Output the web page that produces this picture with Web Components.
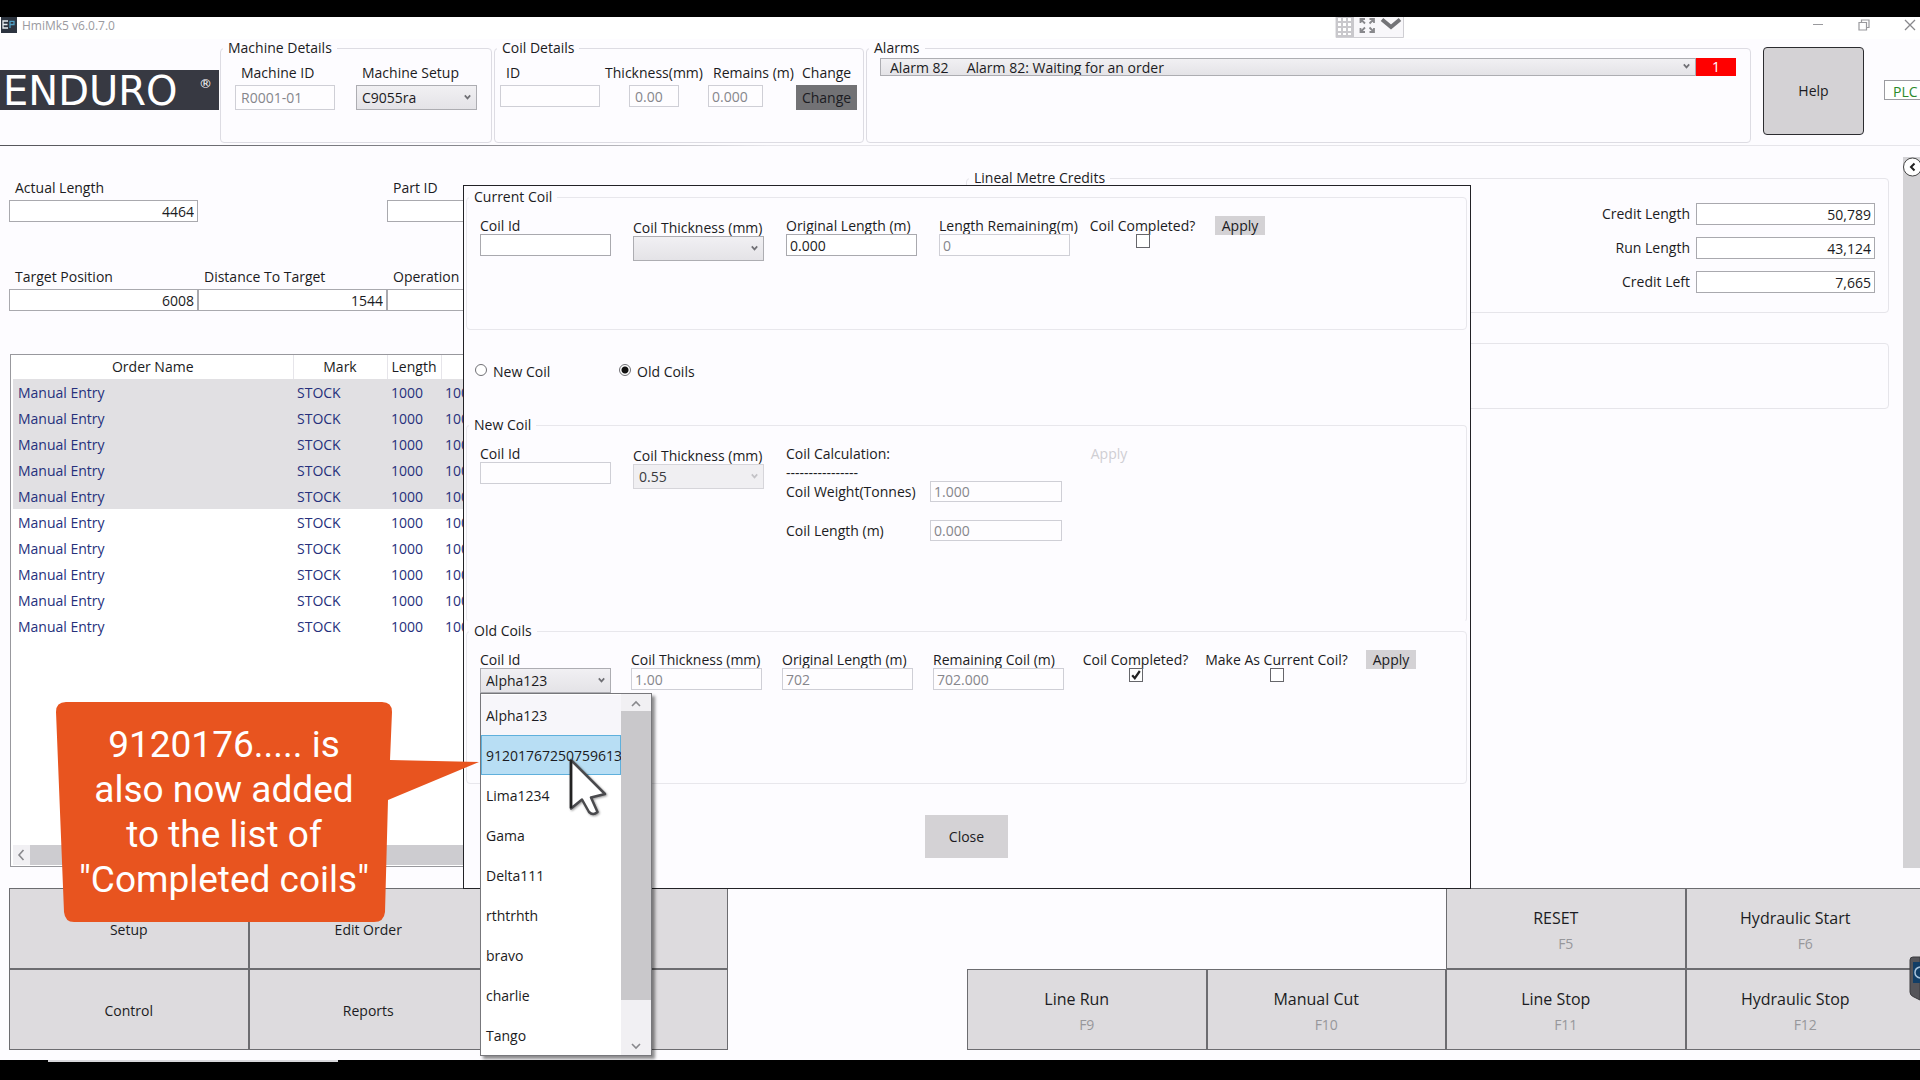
<!DOCTYPE html>
<html lang="en">
<head>
<meta charset="utf-8">
<title>HmiMk5 v6.0.7.0</title>
<style>
  html, body { margin: 0; height: 100%; background: #000; overflow: hidden; }
  body { font: 14px/18px "Open Sans", "Noto Sans", sans-serif; color: #1b1b22; }
</style>
</head>
<body>
<hmi-app></hmi-app>
<script>
const base = `
  *, *::before, *::after { box-sizing: border-box; }
  :host { box-sizing: border-box; }
  :host([hidden]) { display: none; }
  button, input, select { font: inherit; color: inherit; margin: 0; border-radius: 0; }
`;

class HmiElement extends HTMLElement {
  connectedCallback() {
    if (this.shadowRoot) return;
    const root = this.attachShadow({ mode: 'open' });
    root.innerHTML = `<style>${base}${this.styles()}</style>${this.render()}`;
  }
  attr(name, fallback = '') { return this.getAttribute(name) ?? fallback; }
  styles() { return ''; }
  render() { return '<slot></slot>'; }
}

/* Label above (or beside) a text box */
customElements.define('hmi-field', class extends HmiElement {
  styles() {
    return `
      :host { display: flex; flex-direction: column; width: var(--w, 131px); flex: none; }
      :host([inline]) { flex-direction: row; align-items: center; width: auto; }
      label { line-height: var(--label-line, 16px); white-space: nowrap; margin-bottom: var(--label-gap, 0); padding-left: var(--indent, 0); }
      :host([center]) { align-items: center; }
      :host([inline]) label { margin: 0; flex: none; width: var(--label-w, auto); text-align: var(--label-align, left); padding-right: var(--label-pad, 0); }
      input { width: var(--input-w, 100%); height: var(--input-h, 22px); padding: 0 3px; border: 1px solid #a9a9ae; background: #fff; outline: none; }
      :host([right]) input { text-align: right; }
      input:disabled { color: #86868c; border-color: #cfcfd6; background: #fefdff; }
      input.pad { padding-left: var(--input-pad, 3px); }`;
  }
  render() {
    return `<label for="c">${this.attr('label')}</label>
      <input id="c" class="pad" type="text" value="${this.attr('value')}" ${this.hasAttribute('disabled') ? 'disabled' : ''}>`;
  }
});

/* Label above a drop-down, with an optional popup in the slot */
customElements.define('hmi-select', class extends HmiElement {
  styles() {
    return `
      :host { display: flex; flex-direction: column; width: var(--w, 131px); flex: none; }
      label { line-height: var(--label-line, 16px); white-space: nowrap; margin-bottom: var(--label-gap, 0); padding-left: var(--indent, 0); }
      .box { position: relative; display: flex; }
      select { appearance: none; flex: 1; min-width: 0; height: var(--input-h, 25px); padding: 0 18px 0 var(--input-pad, 5px); border: 1px solid #adadb2; background: linear-gradient(#f1f0f3, #e4e3e7); outline: none; }
      select:disabled { opacity: 1; color: #3a3a40; background: #f0eff2; border-color: #d6d5da; }
      svg { position: absolute; right: 6px; top: 50%; margin-top: -4px; pointer-events: none; }
      .off { opacity: .35; }`;
  }
  render() {
    const off = this.hasAttribute('disabled');
    const lab = this.attr('label');
    return `${lab ? `<label for="c">${lab}</label>` : ''}
      <div class="box"><select id="c" ${lab ? '' : `aria-label="${this.attr('name')}"`} ${off ? 'disabled' : ''}><option>${this.attr('value')}</option></select>
      <svg class="${off ? 'off' : ''}" width="7" height="7" viewBox="0 0 7 7"><path d="M.8 1.4 3.5 4.4 6.2 1.4" fill="none" stroke="#707075" stroke-width="1.7"/></svg>
      <slot></slot></div>`;
  }
});

/* Label above a tick box */
customElements.define('hmi-check', class extends HmiElement {
  styles() {
    return `
      :host { display: flex; flex-direction: column; align-items: center; width: var(--w, 103px); flex: none; }
      label { line-height: 16px; white-space: nowrap; }
      .box { position: relative; width: 14px; height: 14px; }
      input { appearance: none; display: block; width: 14px; height: 14px; border: 1px solid #66666b; background: #fff; }
      svg { position: absolute; inset: 0; pointer-events: none; display: none; }
      input:checked + svg { display: block; }`;
  }
  render() {
    return `<label for="c">${this.attr('label')}</label>
      <div class="box"><input id="c" type="checkbox" ${this.hasAttribute('checked') ? 'checked' : ''}>
      <svg width="14" height="14" viewBox="0 0 14 14"><path d="M3.2 7.2 5.8 10.2 10.8 3" fill="none" stroke="#222" stroke-width="2.2"/></svg></div>`;
  }
});

customElements.define('hmi-radio', class extends HmiElement {
  styles() {
    return `
      :host { display: flex; align-items: flex-start; gap: 6px; flex: none; width: 144px; }
      input { appearance: none; width: 12px; height: 12px; margin-top: 1px; border: 1px solid #707075; border-radius: 50%; background: #fff; }
      input:checked { background: radial-gradient(circle, #111 3px, #fff 4px); }
      label { line-height: 18px; }`;
  }
  render() {
    return `<input id="c" type="radio" ${this.hasAttribute('checked') ? 'checked' : ''}><label for="c">${this.attr('label')}</label>`;
  }
});

customElements.define('hmi-button', class extends HmiElement {
  styles() {
    return `
      :host { display: flex; flex: none; width: var(--w, 50px); height: var(--h, 19px); }
      button { flex: 1; padding: 0; border: var(--border, 0); border-radius: var(--radius, 0); background: var(--bg, #d4d2d5); line-height: 18px; }
      button:disabled { background: none; color: #cfced3; }`;
  }
  render() { return `<button type="button" ${this.hasAttribute('disabled') ? 'disabled' : ''}><slot></slot></button>`; }
});

/* Captioned group box */
customElements.define('hmi-group', class extends HmiElement {
  styles() {
    return `
      :host { display: flex; min-width: 0; }
      fieldset { flex: 1; min-width: 0; margin: 0; padding: 0; border: 1px solid var(--line, #dddce3); border-radius: 4px; }
      :host([open]) fieldset { border-bottom-color: transparent; }
      legend { margin-left: 2px; padding: 0 5px; line-height: 18px; }`;
  }
  render() {
    const cap = this.attr('caption');
    return `<fieldset>${cap ? `<legend>${cap}</legend>` : ''}<slot></slot></fieldset>`;
  }
});

customElements.define('hmi-titlebar', class extends HmiElement {
  styles() {
    return `
      :host { display: flex; height: 22px; background: #fff; color: #9a9a9f; font-size: 12px; padding-left: 1px; justify-content: space-between; position: relative; }
      .name { display: flex; gap: 5px; line-height: 17px; }
      .tools { position: absolute; left: 1335px; top: 0; }
      .win { display: flex; gap: 34px; padding: 2px 4px 0 0; }
      svg { display: block; }
      .win button { border: 0; padding: 0; background: none; height: 12px; }`;
  }
  render() {
    return `<div class="name">
        <svg width="16" height="16" viewBox="0 0 16 16"><rect width="16" height="16" fill="#2d3540"/><path d="M7 4H2v7h5M2 7.500h4.500" fill="none" stroke="#e8eef2" stroke-width="1.300"/><path d="M9 11V4.300h4v3.200H9" fill="none" stroke="#4f9fc4" stroke-width="1.300"/></svg>
        <span>HmiMk5 v6.0.7.0</span></div>
      <svg class="tools" width="70" height="21" viewBox="0 0 70 21">
        <path d="M1 0V20.500H68.500V0" fill="#f8f7fa" stroke="#cfced3"/><rect x="1" width="18" height="20" fill="#c9c8cc"/>
        <g fill="#fff"><path d="M3 1h3v3H3zM8 1h3v3H8zM13 1h3v3h-3zM3 6h3v3H3zM8 6h3v3H8zM13 6h3v3h-3zM3 11h3v3H3zM8 11h3v3H8zM13 11h3v3h-3zM3 16h3v2H3zM8 16h3v2H8zM13 16h3v2h-3z"/></g>
        <g fill="none" stroke="#88888c" stroke-width="1.800"><path d="M25.500 6V2H30M25.500 2l4.500 4.500M34.500 2H39v4M39 2l-4.500 4.500M25.500 11v4H30M25.500 15l4.500-4.500M34.500 15H39v-4M39 15l-4.500-4.500"/></g>
        <path d="M47 2.500 56 10 65 2.500" fill="none" stroke="#737377" stroke-width="4"/></svg>
      <div class="win">
        <button aria-label="Minimise"><svg width="12" height="12"><path d="M1 5.500h10" stroke="#99999d"/></svg></button>
        <button aria-label="Restore"><svg width="12" height="12" fill="none" stroke="#99999d" stroke-width="1.200"><path d="M1 3.500h7.500v7.500H1zM3.500 3V1H11v7.500H9"/></svg></button>
        <button aria-label="Close"><svg width="12" height="12"><path d="M1 1 11 11M11 1 1 11" stroke="#88888c" stroke-width="1.300"/></svg></button>
      </div>`;
  }
});

customElements.define('hmi-logo', class extends HmiElement {
  styles() {
    return `
      :host { display: flex; flex: none; width: 219px; height: 40px; margin-top: 31px; padding: 0 7px 0 3px; background: #373942; color: #fff; justify-content: space-between;
        font-family: "DejaVu Sans", sans-serif; }
      b { font-weight: 400; font-size: 40px; line-height: 42px; }
      sup { font-size: 13px; line-height: 28px; vertical-align: top; }`;
  }
  render() { return `<b>ENDURO</b><sup>®</sup>`; }
});

customElements.define('hmi-header', class extends HmiElement {
  styles() {
    return `
      :host { display: flex; height: 107px; border-bottom: 1px solid #e4e3e8; border-image: linear-gradient(90deg, #55555a 0, #8a8a90 25%, #e6e5ea 40%) 1; }
      hmi-group { height: 104px; }
      .row { display: flex; padding: 7px 5px 0 14px; --label-line: 18px; --label-gap: 3px; --input-pad: 5px; }
      .col { display: flex; flex-direction: column; gap: 3px; flex: none; }
      .alarm { display: flex; padding: 1px 14px 0 13px; }
      .alarm hmi-select { flex: 1; --input-h: 18px; --input-pad: 9px; }
      .count { width: 40px; height: 18px; background: #f00; color: #fff; text-align: center; }
      .help { margin: 8px 0 0 12px; --w: 101px; --h: 88px; --border: 1px solid #2c2c30; --radius: 4px; }
      .plc { flex: none; width: 50px; height: 20px; margin: 41px -14px 0 20px; border: 1px solid #9b9ba0; padding-left: 8px; line-height: 22px; color: #2a8a2a; background: #fff; }`;
  }
  render() {
    return `
      <hmi-logo></hmi-logo>
      <hmi-group caption="Machine Details" style="flex:0 0 272px;margin-left:1px"><div class="row" style="gap:21px;--indent:6px">
        <hmi-field label="Machine ID" value="R0001-01" disabled style="--w:100px;--input-h:25px"></hmi-field>
        <hmi-select label="Machine Setup" value="C9055ra" style="--w:121px"></hmi-select></div></hmi-group>
      <hmi-group caption="Coil Details" style="flex:0 0 370px;margin-left:2px"><div class="row" style="padding-left:5px">
        <hmi-field label="ID" disabled style="--w:100px;--indent:6px"></hmi-field>
        <hmi-field label="Thickness(mm)" value="0.00" disabled center style="--w:108px;--input-w:50px"></hmi-field>
        <hmi-field label="Remains (m)" value="0.000" disabled style="--w:88px;--input-w:55px;--indent:5px;--input-pad:3px"></hmi-field>
        <div class="col"><span style="padding-left:6px">Change</span><hmi-button style="--w:61px;--h:25px;--bg:#727275">Change</hmi-button></div></div></hmi-group>
      <hmi-group caption="Alarms" style="flex:1;margin-left:2px"><div class="alarm">
        <hmi-select name="Active alarms" value="Alarm 82&nbsp;&nbsp;&nbsp;&nbsp;&nbsp;Alarm 82: Waiting for an order"></hmi-select><span class="count">1</span></div></hmi-group>
      <hmi-button class="help">Help</hmi-button>
      <span class="plc">PLC</span>`;
  }
});

customElements.define('hmi-orders', class extends HmiElement {
  styles() {
    return `
      :host { display: flex; flex-direction: column; justify-content: space-between; border: 1px solid #98989d; background: #fff; overflow: hidden; padding-left: 2px; }
      table { border-collapse: collapse; table-layout: fixed; width: 100%; }
      th { font-weight: 400; height: 24px; padding: 0; border-right: 1px solid #e6e5ea; }
      td { height: 26px; padding: 1px 4px 0; color: #26307c; }
      td:first-child { padding-left: 5px; }
      tr.sel td { background: #e1e0e3; }
      .bar { display: flex; height: 20px; margin-bottom: 1px; background: #f1f0f3; }
      .bar svg { flex: none; width: 17px; height: 20px; }
      .bar i { width: 600px; background: #cdccd0; }`;
  }
  render() {
    const rows = Array.from({ length: 10 }, (_, i) =>
      `<tr class="${i < 5 ? 'sel' : ''}"><td>Manual Entry</td><td>STOCK</td><td>1000</td><td>1000</td></tr>`).join('');
    return `<table><colgroup><col style="width:280px"><col style="width:94px"><col style="width:54px"><col></colgroup>
      <thead><tr><th>Order Name</th><th>Mark</th><th>Length</th><th></th></tr></thead><tbody>${rows}</tbody></table>
      <div class="bar"><svg viewBox="0 0 17 20"><path d="M10.500 5 6 10l4.500 5" fill="none" stroke="#88888c" stroke-width="1.600"/></svg><i></i></div>`;
  }
});

customElements.define('hmi-workspace', class extends HmiElement {
  styles() {
    return `
      :host { display: flex; flex: 1; min-height: 0; padding-left: 9px; }
      .cols { flex: 1; display: grid; grid-template-columns: 944fr 923fr; gap: 13px; min-width: 0; }
      .left { display: flex; flex-direction: column; padding: 33px 0 21px; min-width: 0; }
      .grid { display: grid; grid-template-columns: repeat(5, 189px); row-gap: 46px; margin-bottom: 43px; --w: 189px; --label-line: 18px; --label-gap: 3px; --indent: 6px; }
      hmi-orders { flex: 1; margin-left: 1px; }
      .right { padding-top: 23px; display: flex; flex-direction: column; gap: 30px; --line: #e6e5ea; }
      .credits { display: flex; flex-direction: column; align-items: flex-end; gap: 12px; padding: 16px 13px 0 0; --input-h: 22px; --input-w: 179px; --label-pad: 6px; }
      .side { width: 17px; margin: 11px 0 20px 14px; background: #d3d2d5; flex: none; position: relative; }
      .side button { position: absolute; left: 0; top: 0; border: 0; padding: 0; background: none; }
      svg { display: block; }`;
  }
  render() {
    return `<div class="cols"><div class="left">
        <div class="grid">
          <hmi-field label="Actual Length" value="4464" right></hmi-field><span></span><hmi-field label="Part ID" right></hmi-field><span></span><span></span>
          <hmi-field label="Target Position" value="6008" right></hmi-field><hmi-field label="Distance To Target" value="1544" right></hmi-field><hmi-field label="Operation Count" right></hmi-field>
        </div>
        <hmi-orders></hmi-orders></div>
      <div class="right">
        <hmi-group caption="Lineal Metre Credits" style="height:144px"><div class="credits">
          <hmi-field inline right label="Credit Length" value="50,789"></hmi-field>
          <hmi-field inline right label="Run Length" value="43,124"></hmi-field>
          <hmi-field inline right label="Credit Left" value="7,665"></hmi-field></div></hmi-group>
        <hmi-group style="height:66px"></hmi-group></div></div>
      <div class="side"><button aria-label="Expand panel"><svg width="20" height="20" viewBox="0 0 20 20"><circle cx="9.500" cy="10" r="9" fill="#fff" stroke="#444"/><path d="M11.500 6.500 8 10l3.500 3.500" fill="none" stroke="#222" stroke-width="2"/></svg></button></div>`;
  }
});

customElements.define('hmi-key', class extends HmiElement {
  styles() {
    return `
      :host { display: flex; }
      button { flex: 1; border: 1px solid #6c6c70; background: #dddbde; padding: 2px 0 0; display: flex; flex-direction: column; align-items: center; justify-content: center; }
      .big { font-size: 16px; line-height: 22px; margin: 0 20px 6px 0; }
      small { font-size: 14px; line-height: 18px; color: #97979b; }`;
  }
  render() {
    const f = this.attr('fkey'), n = this.attr('name');
    return `<button type="button" ${n ? '' : 'aria-label="Function"'}><span class="${f ? 'big' : ''}">${n}</span>${f ? `<small>${f}</small>` : ''}</button>`;
  }
});

customElements.define('hmi-footer', class extends HmiElement {
  styles() {
    return `
      :host { display: grid; grid-template-columns: repeat(8, 1fr); grid-auto-rows: 81px; margin: 0 -5px 10px 9px; }`;
  }
  render() {
    const k = (n, c, r, f = '') => `<hmi-key name="${n}" fkey="${f}" style="grid-area:${r}/${c}"></hmi-key>`;
    return k('Setup', 1, 1) + k('Edit Order', 2, 1) + k('', 3, 1) + k('RESET', 7, 1, 'F5') + k('Hydraulic Start', 8, 1, 'F6')
      + k('Control', 1, 2) + k('Reports', 2, 2) + k('', 3, 2) + k('Line Run', 5, 2, 'F9') + k('Manual Cut', 6, 2, 'F10')
      + k('Line Stop', 7, 2, 'F11') + k('Hydraulic Stop', 8, 2, 'F12');
  }
});

/* Popup list that hangs under a drop-down */
customElements.define('hmi-popup', class extends HmiElement {
  styles() {
    return `
      :host { position: absolute; left: 0; top: 100%; z-index: 5; display: flex; width: 172px; height: 363px; border: 1px solid #77777b; background: #fff; box-shadow: 3px 3px 3px rgba(0,0,0,.45); }
      .list { flex: 1; overflow: hidden; padding-top: 1px; }
      .item { height: 40px; line-height: 40px; padding-left: 4px; border: 1px solid transparent; white-space: nowrap; }
      .first { background: #f7f6fa; }
      .hot { background: #b8def4; border-color: #5fb0dc; }
      .bar { width: 30px; display: flex; flex-direction: column; background: #f1f0f3; }
      .bar i { flex: none; height: 289px; background: #c9c8cb; }
      .down { margin-top: auto; }
      svg { display: block; }`;
  }
  render() {
    const names = ['Alpha123', '91201767250759613', 'Lima1234', 'Gama', 'Delta111', 'rthtrhth', 'bravo', 'charlie', 'Tango'];
    return `<div class="list" role="listbox" aria-label="Coil Id">${names.map((n, i) =>
        `<div role="option" class="item ${['first', 'hot'][i] || ''}">${n}</div>`).join('')}</div>
      <div class="bar"><svg width="30" height="17"><path d="M11 12 15 8l4 4" fill="none" stroke="#88888c" stroke-width="1.600"/></svg><i></i>
      <svg class="down" width="30" height="17"><path d="M11 6 15 10l4-4" fill="none" stroke="#88888c" stroke-width="1.600"/></svg></div>`;
  }
});

customElements.define('hmi-coil-dialog', class extends HmiElement {
  styles() {
    return `
      :host { position: absolute; left: 463px; right: 449px; top: 168px; display: flex; flex-direction: column; padding: 2px 3px 30px 2px; border: 1px solid #222226; background: #fdfcff; --line: #e8e7ec; }
      .row { display: flex; align-items: flex-start; padding: 10px 0 0 13px; gap: 22px; }
      .row > * { margin-top: 2px; }
      .row > hmi-button { margin-top: 0; }
      .low { margin-top: 4px; }
      .old { gap: 20px; }
      .old .low { margin-top: 2px; }
      .radios { display: flex; padding: 33px 0 0 9px; height: 86px; }
      .calc { display: grid; grid-template-columns: auto; --input-h: 21px; --input-w: 132px; --label-w: 144px; line-height: 16px; }
      .calc .dash { margin-top: 3px; }
      .calc hmi-field + hmi-field { margin-top: 18px; }
      .close { align-self: center; margin-top: 31px; --w: 83px; --h: 43px; }`;
  }
  render() {
    return `
      <hmi-group caption="Current Coil" style="height:142px"><div class="row">
        <hmi-field label="Coil Id"></hmi-field>
        <hmi-select class="low" label="Coil Thickness (mm)"></hmi-select>
        <hmi-field label="Original Length (m)" value="0.000"></hmi-field>
        <hmi-field label="Length Remaining(m)" value="0" disabled></hmi-field>
        <hmi-check label="Coil Completed?" style="--w:101px"></hmi-check>
        <hmi-button>Apply</hmi-button></div></hmi-group>
      <div class="radios"><hmi-radio label="New Coil"></hmi-radio><hmi-radio label="Old Coils" checked></hmi-radio></div>
      <hmi-group open caption="New Coil" style="height:206px"><div class="row">
        <hmi-field label="Coil Id" disabled></hmi-field>
        <hmi-select class="low" label="Coil Thickness (mm)" value="0.55" disabled></hmi-select>
        <div class="calc"><span>Coil Calculation:</span><span class="dash">----------------</span>
          <hmi-field inline label="Coil Weight(Tonnes)" value="1.000" disabled></hmi-field>
          <hmi-field inline label="Coil Length (m)" value="0.000" disabled></hmi-field></div>
        <hmi-button disabled>Apply</hmi-button></div></hmi-group>
      <hmi-group caption="Old Coils" style="height:162px"><div class="row old">
        <hmi-select class="low" label="Coil Id" value="Alpha123"><hmi-popup></hmi-popup></hmi-select>
        <hmi-field label="Coil Thickness (mm)" value="1.00" disabled></hmi-field>
        <hmi-field label="Original Length (m)" value="702" disabled></hmi-field>
        <hmi-field label="Remaining Coil (m)" value="702.000" disabled></hmi-field>
        <hmi-check label="Coil Completed?" checked></hmi-check>
        <hmi-check label="Make As Current Coil?" style="--w:139px"></hmi-check>
        <hmi-button>Apply</hmi-button></div></hmi-group>
      <hmi-button class="close">Close</hmi-button>`;
  }
});

customElements.define('hmi-callout', class extends HmiElement {
  styles() {
    return `
      :host { position: absolute; left: 56px; top: 685px; width: 424px; height: 221px; z-index: 6; color: #fff; font: 37px/45px Roboto, sans-serif; }
      svg { position: absolute; left: 0; top: 0; }
      p { position: relative; width: 336px; margin: 0; padding-top: 20px; text-align: center; white-space: nowrap; }`;
  }
  render() {
    return `<svg width="424" height="221" viewBox="0 0 424 221"><path fill="#e8541f" d="M10 0H326Q336 0 336 10L334 58 423 60 332 98 329 210Q328 220 318 220H18Q9 220 8 210L0 10Q0 0 10 0Z"/></svg><p><slot></slot></p>`;
  }
});

customElements.define('hmi-pointer', class extends HmiElement {
  styles() { return `:host { position: absolute; left: 567px; top: 739px; z-index: 7; } svg { display: block; filter: drop-shadow(1px 1px 1px rgba(0,0,0,.4)); }`; }
  render() { return `<svg width="44" height="64" viewBox="0 0 44 64"><path d="M4 4V52.500L15 43.500 22 56Q26 60 30.500 56L24 41.500 38 38Z" fill="#fff" stroke="#4a4a4d" stroke-width="2.500" stroke-linejoin="round"/><path d="M4 52V4" stroke="#222" stroke-width="2.500"/></svg>`; }
});

customElements.define('hmi-app', class extends HmiElement {
  styles() {
    return `
      :host { display: block; height: 100vh; padding: 17px 0 20px; background: #000; overflow: hidden; }
      main { position: relative; display: flex; flex-direction: column; height: 100%; background: #fdfcff; }
      .dock { position: absolute; right: 0; bottom: 59px; }
      .strip { width: 290px; height: 2px; margin-left: 48px; background: #d8d7db; }`;
  }
  render() {
    return `<main><hmi-titlebar></hmi-titlebar><hmi-header></hmi-header><hmi-workspace></hmi-workspace><hmi-footer></hmi-footer>
      <hmi-coil-dialog></hmi-coil-dialog>
      <hmi-callout>9120176..... is<br>also now added<br>to the list of<br>"Completed coils"</hmi-callout>
      <hmi-pointer></hmi-pointer>
      <svg class="dock" width="11" height="45" viewBox="0 0 11 45"><path d="M11 1H4Q1 1 1 4V36Q1 39 4 40.500L11 44Z" fill="#55555a" stroke="#3a3a3e"/><rect x="4" y="6" width="7" height="21" fill="#123e66"/><path d="M11 11Q6 12 6 16.500T11 22" fill="none" stroke="#a9c4dc" stroke-width="1.500"/></svg>
    </main><div class="strip"></div>`;
  }
});
</script>
</body>
</html>
